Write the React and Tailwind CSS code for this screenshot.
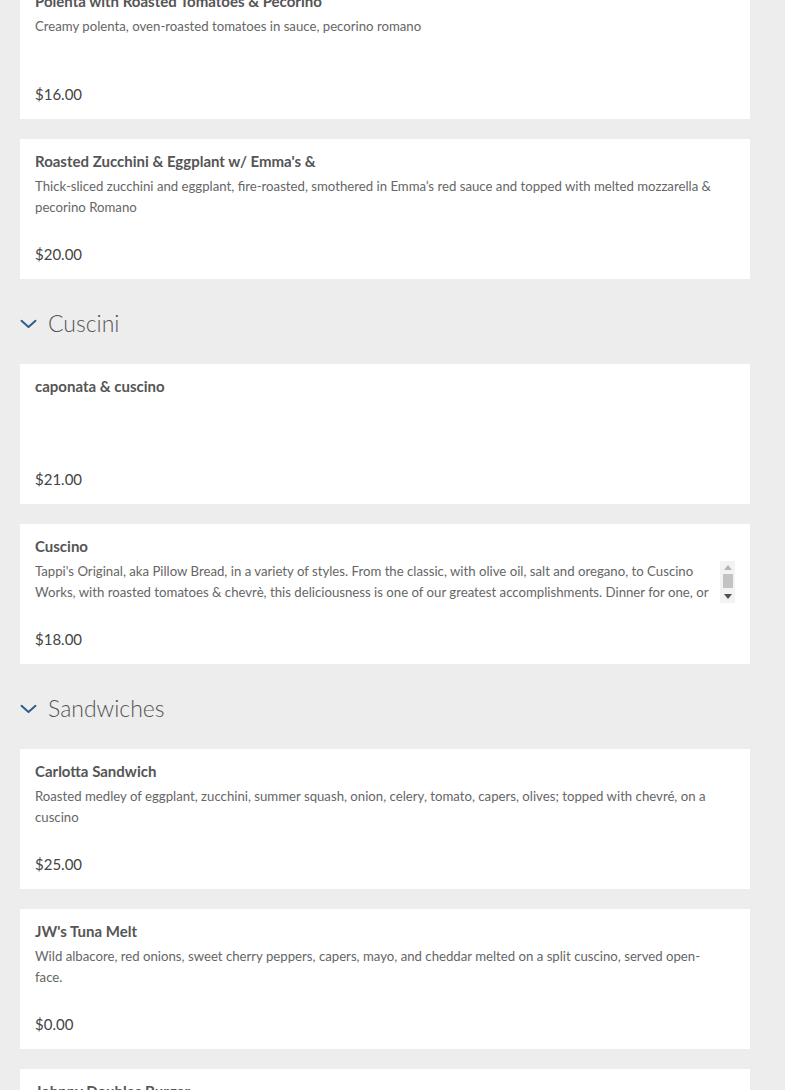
const sections = [
  {
    title: null,
    items: [
      {
        name: 'Polenta with Roasted Tomatoes & Pecorino',
        description: 'Creamy polenta, oven-roasted tomatoes in sauce,  pecorino romano',
        price: '$16.00',
      },
      {
        name: "Roasted Zucchini & Eggplant w/ Emma's &",
        description:
          "Thick-sliced zucchini and eggplant, fire-roasted, smothered in Emma’s red sauce and topped with melted mozzarella & pecorino Romano",
        price: '$20.00',
      },
    ],
  },
  {
    title: 'Cuscini',
    items: [
      { name: 'caponata & cuscino', description: '', price: '$21.00' },
      {
        name: 'Cuscino',
        description:
          "Tappi's Original, aka Pillow Bread, in a variety of styles. From the classic, with olive oil, salt and oregano, to Cuscino Works, with roasted tomatoes & chevrè, this deliciousness is one of our greatest accomplishments. Dinner for one, or a feast for the whole table.",
        price: '$18.00',
        scroll: true,
      },
    ],
  },
  {
    title: 'Sandwiches',
    items: [
      {
        name: 'Carlotta Sandwich',
        description:
          'Roasted medley of eggplant, zucchini, summer squash, onion, celery, tomato, capers, olives; topped with chevré, on a cuscino',
        price: '$25.00',
      },
      {
        name: "JW's Tuna Melt",
        description:
          'Wild albacore, red onions, sweet cherry peppers, capers, mayo, and cheddar melted on a split cuscino, served open-face.',
        price: '$0.00',
      },
      {
        name: 'Johnny Doubles Burger',
        description: 'Two smash patties, american cheese, pickles, onions and special sauce on a toasted bun',
        price: '$19.00',
      },
    ],
  },
]

function Chevron() {
  return (
    <svg width="17" height="10" viewBox="0 0 17 10" fill="none" className="shrink-0">
      <path d="M1.5 1.8 L8.5 8 L15.5 1.8" stroke="#2f5d8a" strokeWidth="2" strokeLinecap="round" strokeLinejoin="round" />
    </svg>
  )
}

function FakeScrollbar() {
  return (
    <div className="flex h-[42px] w-[15px] shrink-0 flex-col items-center bg-[#f3f3f3]">
      <div className="mt-[4px] h-0 w-0 border-x-[4px] border-b-[5px] border-x-transparent border-b-[#b5b5b5]" />
      <div className="mt-[4px] h-[14px] w-[10px] bg-[#c3c3c3]" />
      <div className="mt-[6px] h-0 w-0 border-x-[4px] border-t-[5px] border-x-transparent border-t-[#505050]" />
    </div>
  )
}

function MenuItem({ item }) {
  return (
    <div className="h-[140px] bg-white px-[15px] pt-3">
      <h3 className="text-[15px] font-bold leading-5 text-[#555]">{item.name}</h3>
      <div className="mt-[5px] flex h-[42px]">
        <div
          className={`h-[42px] flex-1 overflow-hidden text-[13.2px] leading-[21px] text-[#666] ${
            item.scroll ? 'pr-[10px]' : 'pr-5'
          }`}
        >
          {item.description}
        </div>
        {item.scroll && <FakeScrollbar />}
      </div>
      <p className="mt-[26px] text-[15px] leading-5 text-[#444]">{item.price}</p>
    </div>
  )
}

export default function App() {
  return (
    <div className="h-[1090px] overflow-hidden bg-[#ededed] font-['Lato',sans-serif]">
      <div className="-mt-[21px] ml-5 flex w-[730px] flex-col">
        {sections.map((section, i) => (
          <section key={i} className="flex flex-col">
            {section.title && (
              <button type="button" className="flex h-[85px] items-center gap-[11px] pt-1 text-left">
                <Chevron />
                <span className="text-[23px] font-light leading-none text-[#555]">{section.title}</span>
              </button>
            )}
            <div className="flex flex-col gap-5">
              {section.items.map((item) => (
                <MenuItem key={item.name} item={item} />
              ))}
            </div>
          </section>
        ))}
      </div>
    </div>
  )
}
